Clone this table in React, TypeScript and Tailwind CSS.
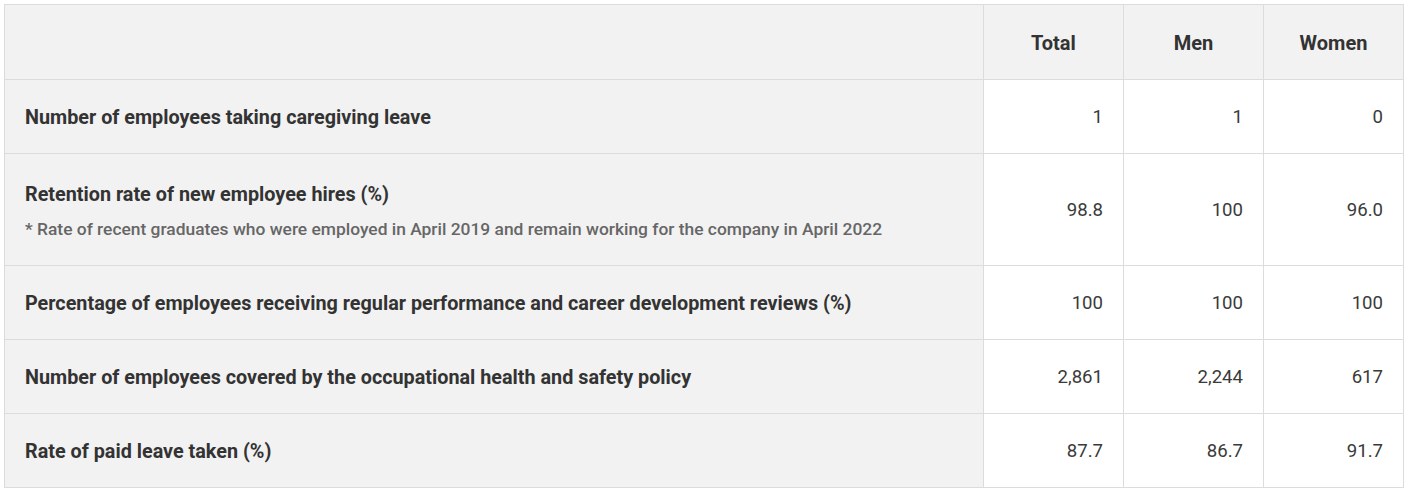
const rows = [
  { label: "Number of employees taking caregiving leave", values: ["1", "1", "0"] },
  {
    label: "Retention rate of new employee hires (%)",
    note: "* Rate of recent graduates who were employed in April 2019 and remain working for the company in April 2022",
    values: ["98.8", "100", "96.0"],
  },
  {
    label: "Percentage of employees receiving regular performance and career development reviews (%)",
    values: ["100", "100", "100"],
  },
  {
    label: "Number of employees covered by the occupational health and safety policy",
    values: ["2,861", "2,244", "617"],
  },
  { label: "Rate of paid leave taken (%)", values: ["87.7", "86.7", "91.7"] },
];

export default function App() {
  return (
    <div className="bg-white p-1 font-['Roboto',sans-serif] text-[#333]">
      <table className="w-[1400px] border-collapse table-fixed">
        <colgroup>
          <col className="w-[979px]" />
          <col className="w-[140px]" />
          <col className="w-[140px]" />
          <col className="w-[140px]" />
        </colgroup>
        <thead>
          <tr className="h-[75px]">
            <th className="border border-[#dcdcdc] bg-[#f2f2f2]"></th>
            {["Total", "Men", "Women"].map((h) => (
              <th key={h} className="border border-[#dcdcdc] bg-[#f2f2f2] pt-[2px] text-center text-[20px] font-bold">
                {h}
              </th>
            ))}
          </tr>
        </thead>
        <tbody>
          {rows.map((r) => (
            <tr key={r.label} className={r.note ? "h-[112px]" : "h-[74px]"}>
              <td className="border border-[#dcdcdc] bg-[#f2f2f2] px-5 pt-[2px] align-middle">
                <div className="text-[19.8px] font-bold leading-[27px]">{r.label}</div>
                {r.note && (
                  <div className="mt-[10px] text-[17.4px] font-medium leading-[22px] text-[#666]">{r.note}</div>
                )}
              </td>
              {r.values.map((v, i) => (
                <td key={i} className="border border-[#dcdcdc] bg-white px-5 pt-[2px] text-right text-[18.6px] text-[#3a3a3a] align-middle">
                  {v}
                </td>
              ))}
            </tr>
          ))}
        </tbody>
      </table>
    </div>
  );
}
